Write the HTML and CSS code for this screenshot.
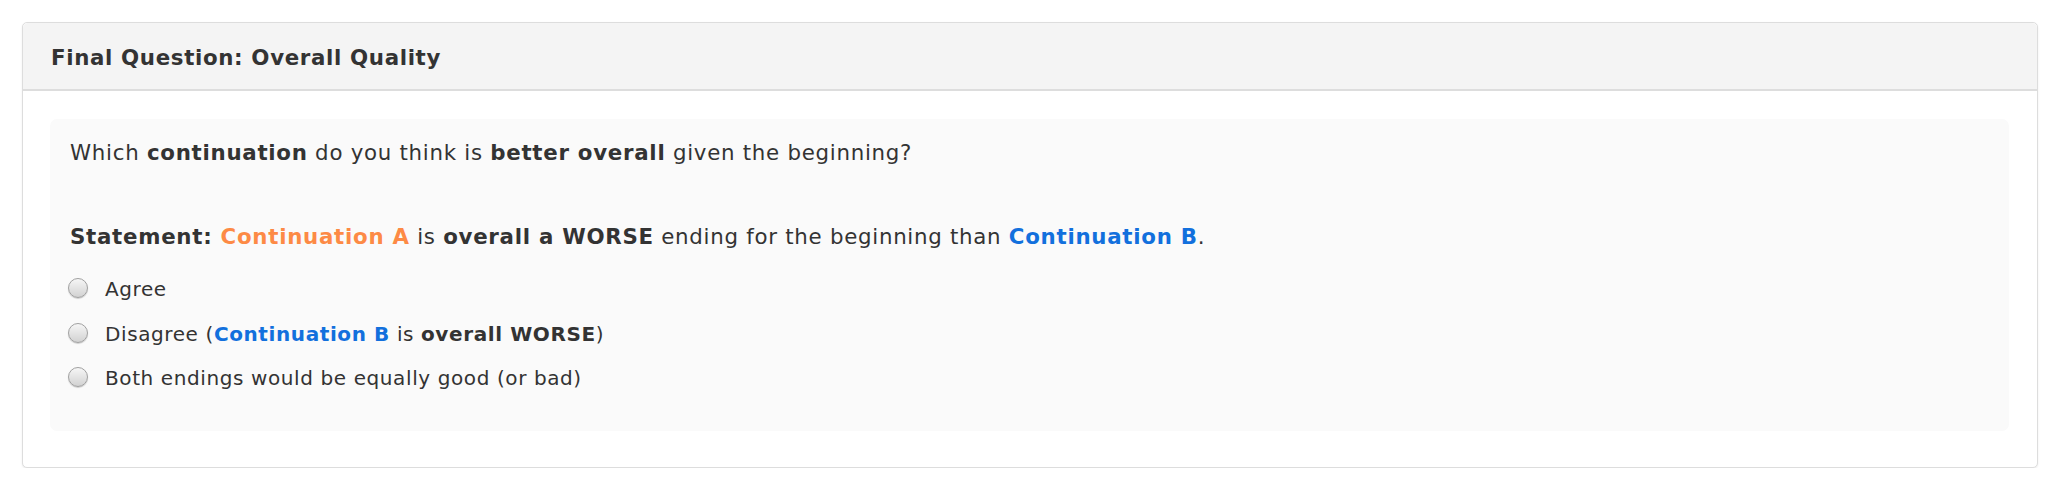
FILE: index.html
```html
<!DOCTYPE html>
<html>
<head>
<meta charset="utf-8">
<link rel="stylesheet" href="styles.css">
</head>
<body>
<div class="panel">
  <div class="panel-heading"><h3 class="panel-title">Final Question: Overall Quality</h3></div>
  <div class="panel-body">
    <div class="well">
      <p class="question">Which <b>continuation</b> do you think is <b>better overall</b> given the beginning?</p>
      <p class="statement"><b>Statement: <span class="cont-a">Continuation A</span></b> is <b>overall a WORSE</b> ending for the beginning than <b class="cont-b">Continuation B</b>.</p>
      <div class="options">
        <label class="option"><input type="radio" name="q" class="radio"><span>Agree</span></label>
        <label class="option"><input type="radio" name="q" class="radio"><span>Disagree (<b class="cont-b">Continuation B</b> is <b>overall WORSE</b>)</span></label>
        <label class="option"><input type="radio" name="q" class="radio"><span>Both endings would be equally good (or bad)</span></label>
      </div>
    </div>
  </div>
</div>
</body>
</html>
```

FILE: styles.css
```css
html, body {
  margin: 0;
  background: #ffffff;
}
body {
  padding: 22px 34px 0 22px;
  font-family: "DejaVu Sans", Verdana, sans-serif;
  font-size: 21.33px;
  color: #333333;
}
.panel {
  border: 1px solid #dddddd;
  border-radius: 5px;
  background: #ffffff;
  box-shadow: 0 1px 2px rgba(0, 0, 0, 0.08);
}
.panel-heading {
  background: #f4f4f4;
  border-bottom: 2px solid #dddddd;
  border-radius: 5px 5px 0 0;
  padding: 21px 28px 17px 28px;
}
.panel-title {
  margin: 0;
  font-size: 21.33px;
  letter-spacing: 0.65px;
  line-height: 28px;
  font-weight: bold;
  color: #333333;
}
.panel-body {
  padding: 28px 28px 36px 27px;
}
.well {
  background: #fafafa;
  border-radius: 7px;
  padding: 19px 20px 38px 20px;
}
.question {
  margin: 0;
  line-height: 30px;
  letter-spacing: 0.72px;
}
.statement {
  margin: 54px 0 0 0;
  line-height: 30px;
  letter-spacing: 0.72px;
}
.cont-a {
  color: #fd8a45;
}
.cont-b {
  color: #1270dd;
}
.options {
  margin-top: 22px;
  display: flex;
  flex-direction: column;
  gap: 14.5px;
  font-size: 20px;
  letter-spacing: 0.6px;
}
.option {
  display: flex;
  align-items: center;
  gap: 17px;
  line-height: 30px;
}
.radio {
  appearance: none;
  -webkit-appearance: none;
  margin: 0 0 0 -2px;
  width: 20px;
  height: 20px;
  border-radius: 50%;
  border: 1px solid #a0a0a0;
  background: linear-gradient(#f6f6f6, #d2d2d2);
  box-shadow: 0 1px 1px rgba(0, 0, 0, 0.18);
  flex: none;
  position: relative;
  top: -1px;
}
```
